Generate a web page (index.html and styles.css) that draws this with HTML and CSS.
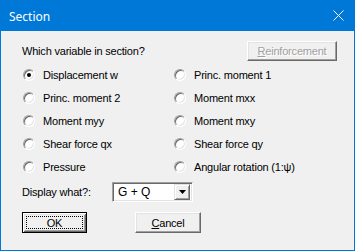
FILE: index.html
```html
<!DOCTYPE html>
<html>
<head>
<meta charset="utf-8">
<link rel="stylesheet" href="styles.css">
</head>
<body>
<div class="window">
  <div class="titlebar">
    <span class="title">Section</span>
    <svg class="close" width="11" height="11" viewBox="0 0 11 11"><path d="M0.5 0.5 L10.5 10.5 M10.5 0.5 L0.5 10.5" stroke="#fff" stroke-width="1" fill="none"/></svg>
  </div>
  <div class="content">
    <div class="header">
      <span>Which variable in section?</span>
      <button class="btn disabled wide"><u>R</u>einforcement</button>
    </div>
    <div class="radios">
      <label class="opt"><span class="radio checked"></span>Displacement w</label>
      <label class="opt"><span class="radio"></span>Princ. moment 1</label>
      <label class="opt"><span class="radio"></span>Princ. moment 2</label>
      <label class="opt"><span class="radio"></span>Moment mxx</label>
      <label class="opt"><span class="radio"></span>Moment myy</label>
      <label class="opt"><span class="radio"></span>Moment mxy</label>
      <label class="opt"><span class="radio"></span>Shear force qx</label>
      <label class="opt"><span class="radio"></span>Shear force qy</label>
      <label class="opt"><span class="radio"></span>Pressure</label>
      <label class="opt"><span class="radio"></span>Angular rotation (1:ψ)</label>
    </div>
    <div class="display">
      <span class="dlabel">Display what?:</span>
      <div class="combo">
        <span class="value">G + Q</span>
        <span class="drop"><svg width="7" height="4" viewBox="0 0 7 4"><path d="M0 0 H7 L3.5 4 Z" fill="#000"/></svg></span>
      </div>
    </div>
    <div class="buttons">
      <button class="btn default"><span class="focus">OK</span></button>
      <button class="btn"><u>C</u>ancel</button>
    </div>
  </div>
</div>
</body>
</html>
```
FILE: styles.css
```css
* { box-sizing: border-box; }
html, body { margin: 0; padding: 0; background: #f0f0f0; }
body {
  font-family: "Liberation Sans", Arial, sans-serif;
  font-size: 11px;
  letter-spacing: -0.2px;
  color: #000;
}
.window {
  width: 355px;
  height: 251px;
  border: 1px solid #0078d7;
  border-top: none;
  background: #f0f0f0;
  display: flex;
  flex-direction: column;
}
.titlebar {
  height: 31px;
  margin: 0 -1px;
  background: #0078d7;
  display: flex;
  align-items: center;
  justify-content: space-between;
  padding: 0 11px 0 9px;
  color: #fff;
  letter-spacing: 0;
}
.title {
  font-family: "Noto Sans", "Open Sans", sans-serif;
  font-size: 12px;
  margin-top: 1px;
}
.close { display: block; }
.content {
  padding: 10px 17px 0 21px;
  display: flex;
  flex-direction: column;
}
.header {
  display: flex;
  justify-content: space-between;
  align-items: center;
  height: 20px;
}
.btn {
  font-family: "Liberation Sans", Arial, sans-serif;
  font-size: 11px;
  letter-spacing: -0.2px;
  color: #000;
  background: #f0f0f0;
  border: 1px solid;
  border-color: #fff #696969 #696969 #fff;
  box-shadow: inset -1px -1px #a0a0a0, inset 1px 1px #e3e3e3;
  padding: 0;
  height: 21px;
  width: 66px;
  display: flex;
  align-items: center;
  justify-content: center;
}
.btn.wide { width: 90px; height: 20px; }
.btn.disabled { color: #a0a0a0; text-shadow: 1px 1px #fff; }
.btn.default {
  border: 1px solid #000;
  box-shadow: inset 1px 1px #fff, inset -1px -1px #696969, inset 2px 2px #e3e3e3, inset -2px -2px #a0a0a0;
  width: 65px;
}
.focus {
  display: flex;
  align-items: center;
  justify-content: center;
  width: 57px;
  height: 13px;
  border: 1px dotted #000;
}
.radios {
  margin-top: 2px;
  display: grid;
  grid-template-columns: 151px auto;
  grid-auto-rows: 23px;
}
.opt {
  display: flex;
  align-items: center;
  gap: 8px;
  white-space: nowrap;
}
.radio {
  width: 12px;
  height: 12px;
  margin-left: 1px;
  border-radius: 50%;
  border: 1px solid;
  border-color: #a0a0a0 #fff #fff #a0a0a0;
  background: #fff;
  box-shadow: inset 1px 1px #696969, inset -1px -1px #e3e3e3;
  display: flex;
  align-items: center;
  justify-content: center;
}
.radio.checked::after {
  content: "";
  width: 4px;
  height: 4px;
  border-radius: 50%;
  background: #000;
}
.display {
  margin-top: 4px;
  display: flex;
  align-items: center;
  height: 20px;
}
.dlabel { width: 90px; }
.combo {
  width: 81px;
  height: 20px;
  border: 1px solid;
  border-color: #a0a0a0 #fff #fff #a0a0a0;
  box-shadow: inset 1px 1px #696969, inset -1px -1px #e3e3e3;
  background: #fff;
  display: flex;
  align-items: center;
  justify-content: space-between;
  padding: 2px;
}
.value { padding-left: 3px; font-size: 12px; letter-spacing: 0; }
.drop {
  width: 16px;
  height: 16px;
  background: #f0f0f0;
  border: 1px solid;
  border-color: #e3e3e3 #696969 #696969 #e3e3e3;
  box-shadow: inset 1px 1px #fff, inset -1px -1px #a0a0a0;
  display: flex;
  align-items: center;
  justify-content: center;
}
.buttons {
  margin-top: 10px;
  display: flex;
  gap: 48px;
}
u { text-decoration: underline; text-underline-offset: 1px; }
```
